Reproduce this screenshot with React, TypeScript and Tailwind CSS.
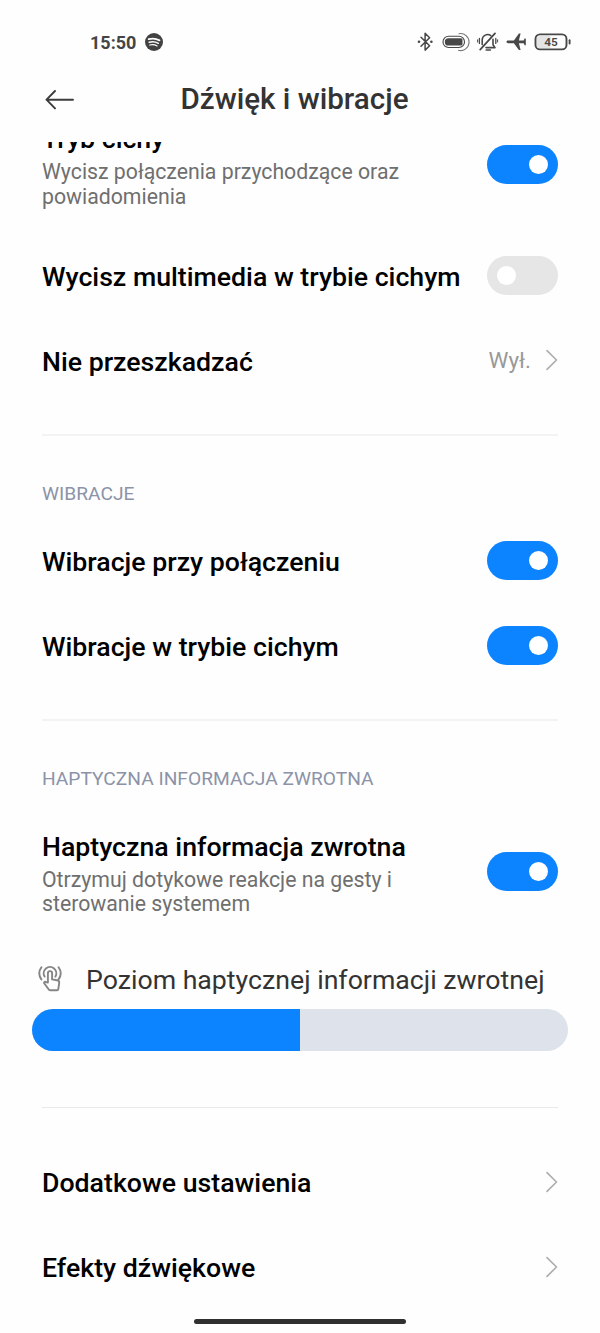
import type { ReactNode } from "react";

interface SwitchProps {
    on: boolean;
}

interface RowProps {
    title: string;
    children?: ReactNode;
}

interface DetailRowProps extends RowProps {
    lines: string[];
    className: string;
}

export default function App() {
    return (
        <div className="flex h-[1333px] w-[600px] flex-col overflow-hidden bg-[#fefefe] font-['Roboto',sans-serif]">
            <StatusBar />
            <Header />
            <main className="h-[1177px] overflow-hidden">
                <DetailRow
                    title="Tryb cichy"
                    lines={["Wycisz połączenia przychodzące oraz", "powiadomienia"]}
                    className="-mt-[47px] h-[138px]"
                >
                    <Switch on />
                </DetailRow>
                <Row title="Wycisz multimedia w trybie cichym">
                    <Switch on={false} />
                </Row>
                <Row title="Nie przeszkadzać">
                    <span className="flex items-center gap-[13px] text-[22.4px] text-[#999999]">
                        <span className="pt-px">Wył.</span>
                        <Chevron />
                    </span>
                </Row>

                <hr className="mx-[42px] mt-[31px] border-t-2 border-[#f3f3f3]" />
                <SectionLabel text="WIBRACJE" />
                <Row title="Wibracje przy połączeniu">
                    <Switch on />
                </Row>
                <Row title="Wibracje w trybie cichym">
                    <Switch on />
                </Row>

                <hr className="mx-[42px] mt-[31px] border-t-2 border-[#f3f3f3]" />
                <SectionLabel text="HAPTYCZNA INFORMACJA ZWROTNA" />
                <DetailRow
                    title="Haptyczna informacja zwrotna"
                    lines={["Otrzymuj dotykowe reakcje na gesty i", "sterowanie systemem"]}
                    className="h-[137px]"
                >
                    <Switch on />
                </DetailRow>
                <HapticSlider value={50} />

                <hr className="mx-[42px] border-t border-[#e8e8e8]" />
                <div className="mt-[31px]">
                    <Row title="Dodatkowe ustawienia">
                        <Chevron />
                    </Row>
                    <Row title="Efekty dźwiękowe">
                        <Chevron />
                    </Row>
                </div>
            </main>
            <div className="mx-auto h-[5px] w-[212px] rounded-full bg-[#303030]" />
        </div>
    );
}

function StatusBar() {
    return (
        <div className="flex h-[60px] shrink-0 items-center justify-between pt-[24px] pr-[28px] pl-[90px] text-[#454545]">
            <div className="flex items-center gap-[9px]">
                <span className="pt-px text-[18px] leading-[36px] font-bold">15:50</span>
                <svg width="18" height="18" viewBox="0 0 18 18" fill="none" strokeLinecap="round">
                    <circle cx="9" cy="9" r="9" fill="#424242" />
                    <g stroke="#fefefe">
                        <path d="M3.7 6.2c3.7-1.1 7.5-.7 10.8 1.2" strokeWidth="1.8" />
                        <path d="M4.2 9.2c3.2-.9 6.4-.5 9.1 1.1" strokeWidth="1.5" />
                        <path d="M4.7 12c2.6-.7 5.2-.4 7.4.9" strokeWidth="1.2" />
                    </g>
                </svg>
            </div>
            <StatusIcons />
        </div>
    );
}

function StatusIcons() {
    return (
        <svg
            width="156"
            height="24"
            viewBox="0 0 156 24"
            fill="none"
            stroke="#484848"
            strokeWidth="1.5"
            strokeLinecap="round"
            strokeLinejoin="round"
        >
            {/* bluetooth */}
            <path d="m5 7.2 8.6 8.6-4.5 4.3V3.3l4.5 4.4L5 16.3" />
            <circle cx="3" cy="11.8" r="1.3" fill="#484848" stroke="none" />
            <circle cx="15.4" cy="11.8" r="1.3" fill="#484848" stroke="none" />

            {/* earbud charge */}
            <rect x="27" y="6.3" width="21.5" height="11.2" rx="5.6" strokeWidth="1.1" />
            <path
                d="M32.5 8.2H45a1.5 1.5 0 0 1 1.5 1.5v4.4a1.5 1.5 0 0 1-1.5 1.5H32.5a3.7 3.7 0 0 1 0-7.4z"
                fill="#484848"
                stroke="none"
            />
            <path d="M43 3.7a8.5 8.5 0 1 1-.5 16.6" strokeWidth="1.1" stroke="#777777" />

            {/* silent bell */}
            <path d="M66.2 14.6V9.8a5.4 5.4 0 0 1 8.6-4.2M77 9.4v5.4l2 2.8h-9M70.2 20h4.2" strokeWidth="1.6" />
            <path d="M79 3.4 64.2 19.6" strokeWidth="1.8" />
            <path d="M63.4 8.4v5M79.8 8.4v5" strokeWidth="1.3" />
            <path d="M61.6 9.8v2.2M81.6 9.8v2.2" strokeWidth="1" />

            {/* airplane */}
            <path
                d="M90.5 11.8c0-1 .8-1.4 1.8-1.4h5.6l5-6.9h1.7l-1.7 6.9h4.8l.9-2h1.2v6.8h-1.2l-.9-2h-4.8l1.7 6.9h-1.7l-5-6.9h-5.6c-1 0-1.8-.4-1.8-1.4z"
                fill="#484848"
                stroke="none"
            />

            {/* battery */}
            <rect x="121" y="6" width="14" height="12" rx="2" fill="#e4e4e4" stroke="none" />
            <rect x="119.5" y="4.4" width="31" height="15" rx="4.5" strokeWidth="1.9" />
            <path d="M153.6 10.3v3.2" strokeWidth="1.9" />
            <text
                x="135"
                y="16"
                textAnchor="middle"
                fontSize="11.8"
                fontWeight="600"
                fill="#484848"
                stroke="none"
            >
                45
            </text>
        </svg>
    );
}

function Header() {
    return (
        <header className="grid h-[82px] shrink-0 grid-cols-[1fr_auto_1fr] items-start pt-[20px] pr-[56px] pl-[45px]">
            <svg
                className="mt-[10px]"
                width="30"
                height="20"
                viewBox="0 0 30 20"
                fill="none"
                stroke="#3c3c3c"
                strokeWidth="1.9"
                strokeLinecap="round"
                strokeLinejoin="round"
            >
                <path d="M10 1 1.5 9.7l8.5 8.7M1.5 9.7H28" />
            </svg>
            <h1 className="text-[29.6px] leading-[38px] font-medium text-[#333333]">Dźwięk i wibracje</h1>
        </header>
    );
}

function Row(props: RowProps) {
    return (
        <div className="flex h-[85px] items-center justify-between px-[42px]">
            <h3 className="pt-[2px] text-[26.7px] leading-[32px] font-medium text-black">{props.title}</h3>
            {props.children}
        </div>
    );
}

function DetailRow(props: DetailRowProps) {
    return (
        <div className={`flex items-center justify-between px-[42px] ${props.className}`}>
            <div className="pt-[4px]">
                <h3 className="text-[26.7px] leading-[32px] font-medium text-black">{props.title}</h3>
                <div className="mt-[5px] text-[21.25px] leading-[24.5px] text-[#6f6f6f]">
                    {props.lines.map((line) => (
                        <p key={line}>{line}</p>
                    ))}
                </div>
            </div>
            {props.children}
        </div>
    );
}

function Switch(props: SwitchProps) {
    return (
        <span
            className={`flex h-[39px] w-[71px] shrink-0 items-center rounded-full px-[10px] ${
                props.on ? "justify-end bg-[#0d84ff]" : "justify-start bg-[#e6e6e6]"
            }`}
        >
            <span className="size-[19px] rounded-full bg-white" />
        </span>
    );
}

function Chevron() {
    return (
        <svg
            width="14"
            height="22"
            viewBox="0 0 14 22"
            fill="none"
            stroke="#adadad"
            strokeWidth="1.6"
            strokeLinecap="round"
            strokeLinejoin="round"
        >
            <path d="m3 1.6 9.5 9.4L3 20.4" />
        </svg>
    );
}

function SectionLabel({ text }: { text: string }) {
    return <h2 className="mt-[46px] mb-[12px] px-[42px] text-[19.2px] leading-[24px] text-[#8c93a8]">{text}</h2>;
}

function HapticSlider({ value }: { value: number }) {
    return (
        <section className="mb-[56px] px-[32px] pt-[17px]">
            <div className="mb-[7px] flex h-[45px] items-center">
                <TouchIcon />
                <span className="ml-[22px] pt-px text-[26.7px] leading-[32px] text-[#333333]">
                    Poziom haptycznej informacji zwrotnej
                </span>
            </div>
            <div className="h-[42px] overflow-hidden rounded-full bg-[#dde2eb]">
                <div className="h-full bg-[#0d84ff]" style={{ width: `${value}%` }} />
            </div>
        </section>
    );
}

function TouchIcon() {
    return (
        <svg
            className="mb-[3px] ml-[6px]"
            width="26"
            height="28"
            viewBox="0 0 26 28"
            fill="none"
            stroke="#858585"
            strokeWidth="1.9"
            strokeLinecap="round"
            strokeLinejoin="round"
        >
            <path d="M9.9 18V9.2a2.1 2.1 0 0 1 4.2 0v6.2l5 .8c1.5.3 2.3 1.2 2.1 2.6l-.9 6.4c-.1.7-.6 1.1-1.3 1.1h-6.6c-.7 0-1.2-.2-1.6-.8L6.2 19.3c-.4-.8.2-1.6 1-1.5l2.7.8" />
            <path d="M6.6 12.6a6.3 6.3 0 1 1 10.8 0" />
            <path d="M3.4 15.4a10.6 10.6 0 0 1 0-12.2M20.6 15.4a10.6 10.6 0 0 0 0-12.2" />
        </svg>
    );
}
